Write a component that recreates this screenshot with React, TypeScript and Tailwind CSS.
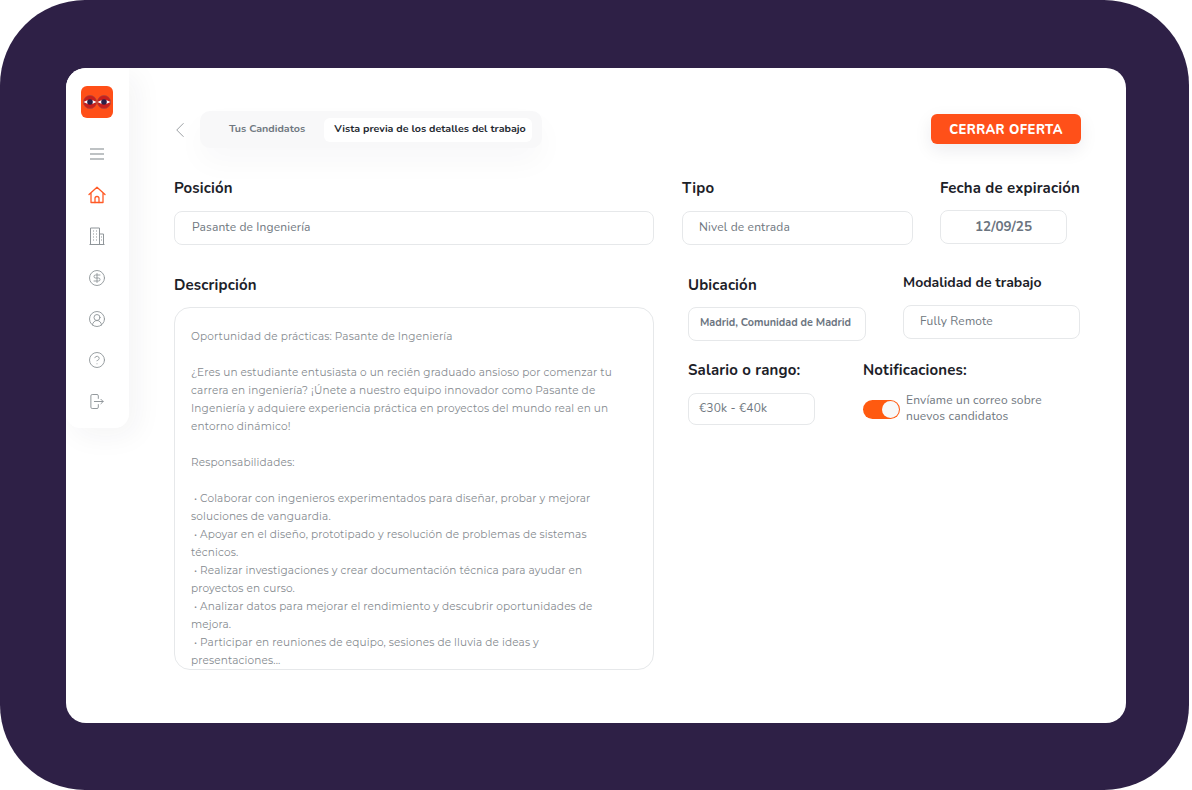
import { ChevronLeft, CircleDollarSign, CircleHelp, CircleUserRound } from "lucide-react";

const body = "font-['Nunito','Lato',sans-serif]";

const description = [
  "Oportunidad de prácticas: Pasante de Ingeniería",
  "",
  "¿Eres un estudiante entusiasta o un recién graduado ansioso por comenzar tu",
  "carrera en ingeniería? ¡Únete a nuestro equipo innovador como Pasante de",
  "Ingeniería y adquiere experiencia práctica en proyectos del mundo real en un",
  "entorno dinámico!",
  "",
  "Responsabilidades:",
  "",
  " • Colaborar con ingenieros experimentados para diseñar, probar y mejorar",
  "soluciones de vanguardia.",
  " • Apoyar en el diseño, prototipado y resolución de problemas de sistemas",
  "técnicos.",
  " • Realizar investigaciones y crear documentación técnica para ayudar en",
  "proyectos en curso.",
  " • Analizar datos para mejorar el rendimiento y descubrir oportunidades de",
  "mejora.",
  " • Participar en reuniones de equipo, sesiones de lluvia de ideas y",
  "presentaciones...",
];

function Logo() {
  return (
    <svg width="32" height="32" viewBox="0 0 32 32">
      <rect width="32" height="32" rx="6" fill="#ff4f18" />
      {[9, 23].map((cx) => (
        <g key={cx}>
          <circle cx={cx} cy="16" r="6.6" fill="#c9201c" stroke="#a8463f" strokeWidth="0.7" />
          <path d={`M${cx - 6.5} 16 Q${cx} 12 ${cx + 6.5} 16 Q${cx} 20 ${cx - 6.5} 16Z`} fill="#fff" />
          <circle cx={cx} cy="16" r="2.8" fill="#2d1f47" />
        </g>
      ))}
    </svg>
  );
}

function MenuIcon() {
  return (
    <svg width="14" height="12" viewBox="0 0 14 12" fill="none" stroke="#7f8689" strokeWidth="1.2">
      <path d="M0 1h14M0 6h14M0 11h14" />
    </svg>
  );
}

function HomeIcon() {
  return (
    <svg width="18" height="18" viewBox="0 0 18 18" fill="none" stroke="#ff5a26" strokeWidth="1.3" strokeLinejoin="round" strokeLinecap="round">
      <path d="M1 8.6 9 1.2l8 7.4M3 7v9.5h12V7" />
      <path d="M7 16.5v-4a2 2 0 0 1 4 0v4" />
    </svg>
  );
}

function BuildingIcon() {
  return (
    <svg width="16" height="18" viewBox="0 0 16 18" fill="none" stroke="#8f9599" strokeWidth="1">
      <path d="M.5 17.5h15M1.5 17.5V1h9v16.5M10.5 7H14.5v10.5" />
      <path d="M4 4h1M7 4h1M4 7h1M7 7h1M4 10h1M7 10h1M4 13h1M7 13h1M12 10h1M12 13h1" />
    </svg>
  );
}

function LogoutIcon() {
  return (
    <svg width="14" height="15" viewBox="0 0 16 17" fill="none" stroke="#8f9599" strokeWidth="1.1" strokeLinecap="round" strokeLinejoin="round">
      <path d="M9.5 5V2a1.5 1.5 0 0 0-1.5-1.5H2.5A1.5 1.5 0 0 0 1 2v13a1.5 1.5 0 0 0 1.5 1.5H8A1.5 1.5 0 0 0 9.5 15v-3" />
      <path d="M5 8.5h10M12.5 6l2.5 2.5-2.5 2.5" />
    </svg>
  );
}

function Sidebar() {
  const icons = [
    <MenuIcon />,
    <HomeIcon />,
    <BuildingIcon />,
    <CircleDollarSign size={18} strokeWidth={1.2} color="#8f9599" />,
    <CircleUserRound size={18} strokeWidth={1.2} color="#8f9599" />,
    <CircleHelp size={18} strokeWidth={1.2} color="#8f9599" />,
    <LogoutIcon />,
  ];
  return (
    <aside className="flex h-[360px] w-[63px] shrink-0 flex-col items-center rounded-b-[14px] bg-white pt-[18px] pr-[1px] shadow-[8px_8px_28px_rgba(30,30,50,0.05)]">
      <Logo />
      <div className="mt-[15px] flex flex-col items-center">
        {icons.map((icon, i) => (
          <div key={i} className="flex h-[41.3px] items-center justify-center">{icon}</div>
        ))}
      </div>
    </aside>
  );
}

function Label({ children }: { children: React.ReactNode }) {
  return <div className="text-[15px] leading-5 font-bold tracking-[0.15px] whitespace-nowrap text-[#1c2128]">{children}</div>;
}

function Field({ children, className = "" }: { children: React.ReactNode; className?: string }) {
  return (
    <div className={`flex items-center rounded-lg border border-[#e6e8ea] bg-white pb-[2px] whitespace-nowrap ${className}`}>
      {children}
    </div>
  );
}

const plain = "text-[12px] tracking-[0.15px] text-[#6f7780]";

export default function App() {
  return (
    <div className={`h-[790px] w-[1192px] overflow-hidden bg-white ${body}`}>
      <div className="h-[790px] w-[1189px] rounded-[85px] bg-[#2e2046] pt-[68px] pl-[66px]">
        <div className="flex h-[655px] w-[1060px] overflow-hidden rounded-[20px] bg-white">
          <Sidebar />
          <main className="flex-1 pt-[43px] pl-[45px]">
            <div className="flex h-[37px] w-[907px] items-center">
              <ChevronLeft size={26} strokeWidth={0.8} color="#8b9195" className="-ml-[7px]" />
              <div className="ml-[7px] flex h-[37px] w-[342px] items-center rounded-[10px] bg-[#f8f8f9] pl-[29px] text-[10.7px] whitespace-nowrap shadow-[0_14px_30px_rgba(30,30,50,0.03)]">
                <span className="font-bold text-[#6f7780]">Tus Candidatos</span>
                <span className="ml-[19px] flex h-[24px] w-[208px] items-center rounded-[6px] bg-white pl-[10px] font-bold text-[#23282f]">
                  Vista previa de los detalles del trabajo
                </span>
              </div>
              <button className="mt-[-1px] ml-auto h-[30px] w-[150px] rounded-[6px] bg-[#ff5019] pt-[4px] text-[13px] font-extrabold tracking-[0.4px] text-white shadow-[0_6px_18px_rgba(30,30,50,0.08)]">
                CERRAR OFERTA
              </button>
            </div>

            <div className="mt-[30px] flex">
              <div className="w-[480px]">
                <Label>Posición</Label>
                <Field className={`mt-[13px] h-[34px] pl-[17px] ${plain}`}>Pasante de Ingeniería</Field>
              </div>
              <div className="ml-[28px] w-[231px]">
                <Label>Tipo</Label>
                <Field className={`mt-[13px] h-[34px] pl-[16px] ${plain}`}>Nivel de entrada</Field>
              </div>
              <div className="ml-[27px] w-[140px]">
                <Label>Fecha de expiración</Label>
                <Field className="mt-[12px] h-[34px] w-[127px] justify-center pt-[2px] text-[13.5px] font-bold text-[#6b7480]">12/09/25</Field>
              </div>
            </div>

            <div className="mt-[30px] flex">
              <div className="w-[480px]">
                <Label>Descripción</Label>
                <div className="mt-[12px] h-[363px] overflow-hidden rounded-[16px] border border-[#e6e8ea] pt-[20px] pl-[16px] font-['Montserrat','Inter',sans-serif] text-[10.5px] leading-[18px] tracking-[0.15px] whitespace-pre text-[#858a8f]">
                  {description.map((line, i) => (
                    <div key={i} className="h-[18px]">{line}</div>
                  ))}
                </div>
              </div>
              <div className="ml-[34px] flex w-[392px] flex-col">
                <div className="flex">
                  <div className="w-[215px]">
                    <Label>Ubicación</Label>
                    <Field className="mt-[12px] h-[34px] w-[178px] pl-[11px] text-[10.8px] font-bold text-[#6b7480]">
                      Madrid, Comunidad de Madrid
                    </Field>
                  </div>
                  <div className="-mt-[2px] w-[177px]">
                    <div className="text-[14px] leading-5 font-bold whitespace-nowrap text-[#1c2128]">Modalidad de trabajo</div>
                    <Field className={`mt-[12px] h-[34px] pl-[16px] ${plain}`}>Fully Remote</Field>
                  </div>
                </div>
                <div className="mt-[19px] flex">
                  <div className="w-[175px]">
                    <Label>Salario o rango:</Label>
                    <Field className={`mt-[13px] h-[32px] w-[127px] pl-[10px] ${plain}`}>€30k - €40k</Field>
                  </div>
                  <div className="flex-1">
                    <Label>Notificaciones:</Label>
                    <div className="mt-[12px] flex items-center">
                      <div className="mt-[2px] flex h-[19px] w-[37px] items-center justify-end rounded-full bg-[#ff5a10] pr-[1px]">
                        <div className="h-[17px] w-[17px] rounded-full bg-[#f8f8f8]" />
                      </div>
                      <div className={`ml-[6px] leading-4 ${plain}`}>
                        Envíame un correo sobre
                        <br />
                        nuevos candidatos
                      </div>
                    </div>
                  </div>
                </div>
              </div>
            </div>
          </main>
        </div>
      </div>
    </div>
  );
}
